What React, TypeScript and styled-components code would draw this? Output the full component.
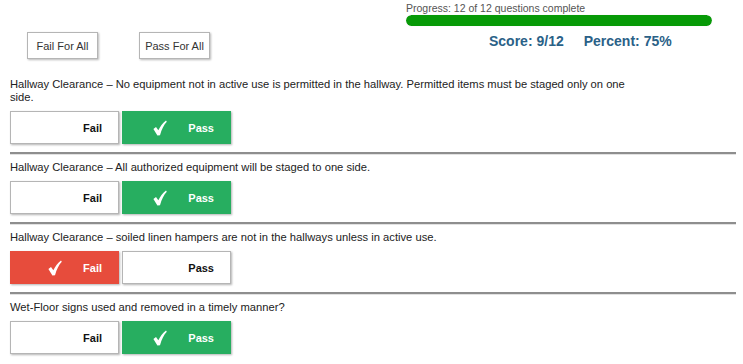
import React from 'react';
import styled, { createGlobalStyle, css } from 'styled-components';

const GlobalStyle = createGlobalStyle`
  html, body {
    margin: 0;
    padding: 0;
    background: #fff;
    font-family: "Liberation Sans", Arial, sans-serif;
    color: #333;
  }
`;

const Page = styled.div`
  width: 743px;
  padding: 0 7px 0 10px;
  box-sizing: border-box;
`;

const Header = styled.div`
  display: flex;
  height: 72px;
`;

const BulkActions = styled.div`
  display: flex;
  gap: 41px;
  padding: 32px 0 0 17px;
  width: 396px;
  box-sizing: border-box;
  align-items: flex-start;
`;

const BulkButton = styled.button`
  height: 27px;
  width: 71px;
  padding: 0;
  background: #fff;
  border: 1px solid #b5b5b5;
  box-shadow: 1px 1px 2px rgba(0, 0, 0, 0.28);
  font-family: inherit;
  font-size: 11px;
  color: #333;
  cursor: pointer;
`;

const ProgressBlock = styled.div`
  display: flex;
  flex-direction: column;
  padding-top: 2px;
`;

const ProgressLabel = styled.div`
  font-size: 10.5px;
  line-height: 12px;
  color: #555;
  height: 13px;
`;

const ProgressTrack = styled.div`
  width: 306px;
  height: 11px;
  border-radius: 6px;
  background: #eee;
  overflow: hidden;
  box-shadow: 0 0 1px rgba(0, 0, 0, 0.15);
`;

const ProgressFill = styled.div`
  height: 100%;
  background: #079a07;
  border-radius: 6px;
`;

const ScoreRow = styled.div`
  display: flex;
  gap: 20px;
  margin: 7px 0 0 83px;
  font-size: 14px;
  font-weight: bold;
  color: #2a6187;
`;

const Question = styled.div`
  padding: 6px 0 8px;
`;

const QuestionText = styled.div`
  font-size: 11.2px;
  line-height: 13px;
  max-width: 628px;
  color: #222;
  margin-bottom: 7px;
`;

const Choices = styled.div`
  display: flex;
  gap: 3px;
`;

const Choice = styled.button<{ $selected: boolean; $tone: 'fail' | 'pass' }>`
  width: 109px;
  height: 33px;
  display: flex;
  align-items: center;
  justify-content: flex-end;
  gap: 21px;
  padding: 0 16px 0 0;
  box-sizing: border-box;
  font-family: inherit;
  font-size: 11px;
  font-weight: bold;
  cursor: pointer;
  box-shadow: 1px 1px 2px rgba(0, 0, 0, 0.3);
  ${(p) =>
    p.$selected
      ? css`
          color: #fff;
          border: 1px solid ${p.$tone === 'pass' ? '#27ae60' : '#e74c3c'};
          background: ${p.$tone === 'pass' ? '#27ae60' : '#e74c3c'};
        `
      : css`
          color: #111;
          border: 1px solid #b5b5b5;
          background: #fff;
        `}
`;

const CheckSlot = styled.span<{ $visible: boolean }>`
  display: flex;
  width: 14px;
  visibility: ${(p) => (p.$visible ? 'visible' : 'hidden')};
`;

const Divider = styled.div`
  border-top: 2px solid #8e8e8e;
  border-bottom: 1px solid #e2e2e2;
`;

const Check = () => (
  <svg width="14" height="16" viewBox="0 0 14 16">
    <path
      d="M0.4 9 L3 7 L5.3 10.2 C7.3 6.2 9.8 2.8 13 0.4 L13.8 1.8 C10.9 4.8 8.6 9.4 7 15.3 L4.4 15.6 Z"
      fill="#fff"
    />
  </svg>
);

type Answer = 'fail' | 'pass';

const questions: { text: string; answer: Answer }[] = [
  {
    text: 'Hallway Clearance \u2013 No equipment not in active use is permitted in the hallway. Permitted items must be staged only on one side.',
    answer: 'pass',
  },
  { text: 'Hallway Clearance \u2013 All authorized equipment will be staged to one side.', answer: 'pass' },
  {
    text: 'Hallway Clearance \u2013 soiled linen hampers are not in the hallways unless in active use.',
    answer: 'fail',
  },
  { text: 'Wet-Floor signs used and removed in a timely manner?', answer: 'pass' },
];

export default function App() {
  return (
    <Page>
      <GlobalStyle />
      <Header>
        <BulkActions>
          <BulkButton>Fail For All</BulkButton>
          <BulkButton>Pass For All</BulkButton>
        </BulkActions>
        <ProgressBlock>
          <ProgressLabel>Progress: 12 of 12 questions complete</ProgressLabel>
          <ProgressTrack>
            <ProgressFill style={{ width: `${(12 / 12) * 100}%` }} />
          </ProgressTrack>
          <ScoreRow>
            <span>Score: 9/12</span>
            <span>Percent: 75%</span>
          </ScoreRow>
        </ProgressBlock>
      </Header>
      {questions.map((q, i) => (
        <React.Fragment key={i}>
          {i > 0 && <Divider />}
          <Question>
            <QuestionText>{q.text}</QuestionText>
            <Choices>
              <Choice $tone="fail" $selected={q.answer === 'fail'}>
                <CheckSlot $visible={q.answer === 'fail'}>
                  <Check />
                </CheckSlot>
                Fail
              </Choice>
              <Choice $tone="pass" $selected={q.answer === 'pass'}>
                <CheckSlot $visible={q.answer === 'pass'}>
                  <Check />
                </CheckSlot>
                Pass
              </Choice>
            </Choices>
          </Question>
        </React.Fragment>
      ))}
    </Page>
  );
}
